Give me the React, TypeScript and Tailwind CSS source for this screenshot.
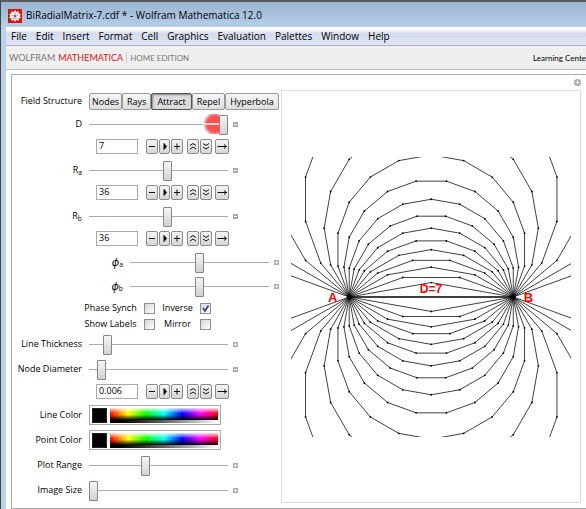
import { useState } from "react"
import type { ReactNode } from "react"

const menus = ["File", "Edit", "Insert", "Format", "Cell", "Graphics", "Evaluation", "Palettes", "Window", "Help"]
const structures = ["Nodes", "Rays", "Attract", "Repel", "Hyperbola"]

const buttonStyle =
  "flex items-center justify-center rounded-[2px] border border-[#8a8a8a] bg-linear-to-b from-[#f5f5f5] to-[#d6d6d6]"

// Poles of the field in plot coordinates
const poleA = { x: 58, y: 139.5 }
const poleB = { x: 221.5, y: 139.5 }
const step = 10

type Point = { x: number; y: number }

// Crossing of the ray at angle a from pole A with the ray at angle b from pole B
function crossing(a: number, b: number, side: number): Point {
  const ra = (a * Math.PI) / 180
  const rb = (b * Math.PI) / 180
  const r = ((poleB.x - poleA.x) * Math.sin(rb)) / Math.sin(ra + rb)
  return { x: poleA.x + r * Math.cos(ra), y: poleA.y - side * r * Math.sin(ra) }
}

function fieldLines() {
  const lines: Point[][] = []
  for (const side of [1, -1]) {
    for (let sum = 2 * step; sum < 180; sum += step) {
      const line: Point[] = []
      for (let a = sum; a >= 0; a -= step) {
        line.push(crossing(a, sum - a, side))
      }
      lines.push(line)
    }
  }
  return lines
}

function FieldPlot() {
  const lines = fieldLines()
  return (
    <svg viewBox="0 0 279 279" className="w-full overflow-hidden" role="img" aria-label="Field plot">
      {lines.map((line, i) => (
        <g key={i}>
          <polyline
            points={line.map((p) => `${p.x.toFixed(2)},${p.y.toFixed(2)}`).join(" ")}
            fill="none"
            stroke="#000"
            strokeWidth="0.75"
          />
          {line.map((p, j) => (
            <circle key={j} cx={p.x} cy={p.y} r="0.9" />
          ))}
        </g>
      ))}
      <path d={`M${poleA.x} ${poleA.y}H${poleB.x}`} stroke="#000" strokeWidth="1.6" />
      <circle cx={poleA.x} cy={poleA.y} r="2.5" />
      <circle cx={poleB.x} cy={poleB.y} r="2.5" />
      <g fill="#f00" fontFamily="Liberation Sans, Arial, sans-serif" fontWeight="bold" fontSize="13" textAnchor="middle">
        <text x="41.5" y="144">A</text>
        <text x="139.5" y="136" fontSize="12">D=7</text>
        <text x="236.5" y="144">B</text>
      </g>
    </svg>
  )
}

function Row({ label, htmlFor, children }: { label: ReactNode; htmlFor?: string; children: ReactNode }) {
  return (
    <div className="flex h-6 items-center">
      <label htmlFor={htmlFor} className="w-[70px] shrink-0 text-right whitespace-nowrap">
        {label}
      </label>
      <div className="ml-[7px] flex items-center">{children}</div>
    </div>
  )
}

function Slider({ id, start, open, glow }: { id: string; start: number; open?: boolean; glow?: boolean }) {
  const [value, setValue] = useState(start)
  return (
    <>
      <span className="relative flex">
        <input
          id={id}
          type="range"
          min={0}
          max={130}
          value={value}
          onChange={(e) => setValue(Number(e.target.value))}
          className="h-5 w-[139px] appearance-none bg-transparent [&::-webkit-slider-runnable-track]:h-px [&::-webkit-slider-runnable-track]:bg-[#aaa] [&::-webkit-slider-thumb]:-mt-[9px] [&::-webkit-slider-thumb]:h-5 [&::-webkit-slider-thumb]:w-[9px] [&::-webkit-slider-thumb]:appearance-none [&::-webkit-slider-thumb]:rounded-[1px] [&::-webkit-slider-thumb]:border [&::-webkit-slider-thumb]:border-[#858585] [&::-webkit-slider-thumb]:bg-linear-to-b [&::-webkit-slider-thumb]:from-[#f6f6f6] [&::-webkit-slider-thumb]:to-[#d2d2d2]"
        />
        {glow && (
          <span className="pointer-events-none absolute top-0 right-[9px] h-5 w-[16px] bg-[linear-gradient(transparent_9px,#ffd0d0_9px,#ffd0d0_11px,transparent_11px),radial-gradient(circle_at_12px_10px,#ff5050_7px,#ff6a6a_9px,transparent_12px)]" />
        )}
      </span>
      <button
        type="button"
        aria-label={open ? "Show controls" : "Hide controls"}
        className="ml-[5px] flex size-[5px] items-center justify-center bg-[#aaa]"
      >
        <svg viewBox="0 0 5 5" className="size-[5px]" stroke="#fff">
          <path d={open ? "M1 2.5H4M2.5 1V4" : "M1 2.5H4"} />
        </svg>
      </button>
    </>
  )
}

function Glyph({ d, solid }: { d: string; solid?: boolean }) {
  return (
    <svg viewBox="0 0 10 12" className="h-3 w-2.5 shrink-0" fill={solid ? "#000" : "none"} stroke="#111" strokeWidth="1">
      <path d={d} />
    </svg>
  )
}

function Animator({ name, start }: { name: string; start: string }) {
  const [value, setValue] = useState(start)
  return (
    <div className="ml-[84px] flex h-5 items-center">
      <input
        type="text"
        aria-label={name}
        value={value}
        onChange={(e) => setValue(e.target.value)}
        className="h-[15px] w-[42px] border border-[#aaa] bg-white px-[2px] text-[9px]"
      />
      <div className="ml-2 flex gap-px">
        <button type="button" aria-label="Step back" className={`${buttonStyle} h-[15px] w-3`}>
          <Glyph d="M2 6.5H8" />
        </button>
        <button type="button" aria-label="Play" className={`${buttonStyle} h-[15px] w-[11px]`}>
          <Glyph d="M4 3.5L6.5 6.5L4 9.5Z" solid />
        </button>
        <button type="button" aria-label="Step forward" className={`${buttonStyle} h-[15px] w-3`}>
          <Glyph d="M2 6.5H8M5 3.5V9.5" />
        </button>
      </div>
      <div className="ml-1 flex gap-px">
        <button type="button" aria-label="Faster" className={`${buttonStyle} h-[15px] w-3`}>
          <Glyph d="M2 5.5L5 3.5L8 5.5M2 9L5 7L8 9" />
        </button>
        <button type="button" aria-label="Slower" className={`${buttonStyle} h-[15px] w-3`}>
          <Glyph d="M2 3.5L5 5.5L8 3.5M2 7L5 9L8 7" />
        </button>
      </div>
      <button type="button" aria-label="Direction" className={`${buttonStyle} ml-[3px] h-[15px] w-[14px]`}>
        <Glyph d="M0.5 6.5H9.5M7 4.5L9.5 6.5L7 8.5" />
      </button>
    </div>
  )
}

function CheckBox({ label, start }: { label: string; start?: boolean }) {
  const [checked, setChecked] = useState(Boolean(start))
  return (
    <label className="contents">
      <span className="text-center">{label}</span>
      <span className="relative flex size-[11px]">
        <input
          type="checkbox"
          checked={checked}
          onChange={(e) => setChecked(e.target.checked)}
          className="size-[11px] appearance-none border border-[#8e8f8f] bg-linear-to-br from-[#d5d8dc] to-white"
        />
        {checked && (
          <svg viewBox="0 0 11 11" className="pointer-events-none absolute inset-0" fill="none" stroke="#2c3f87" strokeWidth="1.7">
            <path d="M3 5L5 8L8.5 2.5" />
          </svg>
        )}
      </span>
    </label>
  )
}

function ColorSlider({ name }: { name: string }) {
  return (
    <div className="flex h-5 w-[132px] border border-[#aaa] bg-white p-[2px]">
      <button type="button" aria-label={`${name} swatch`} className="h-[15px] w-[15px] shrink-0 border border-[#222] bg-black" />
      <button type="button" aria-label={name} className="ml-[3px] flex h-[15px] flex-1 flex-col">
        <span className="h-3 w-full bg-[linear-gradient(rgba(255,255,255,0.85),transparent_45%,transparent_55%,black),linear-gradient(90deg,#f00,#ff0,#0f0,#0ff,#00f,#f0f,#f00)]" />
        <span className="h-[3px] w-full bg-linear-to-r from-black to-white" />
      </button>
    </div>
  )
}

function Controls() {
  const [structure, setStructure] = useState("Attract")
  return (
    <div className="w-[269px] shrink-0 text-[9px] leading-4">
      <div className="flex h-[22px] items-center">
        <span className="w-[70px] shrink-0 text-right whitespace-nowrap">Field Structure</span>
        <div className="ml-[7px] flex">
          {structures.map((name) => (
            <button
              key={name}
              type="button"
              aria-pressed={structure === name}
              onClick={() => setStructure(name)}
              className={
                structure === name
                  ? "h-[17px] rounded-[2px] border border-[#555] bg-[#dcdcdc] px-[5px] leading-[15px] shadow-[inset_1px_1px_2px_#888]"
                  : "h-[17px] rounded-[2px] border border-[#999] bg-linear-to-b from-[#f7f7f7] to-[#dedede] px-1 leading-[15px] first:px-[2px]"
              }
            >
              {name}
            </button>
          ))}
        </div>
      </div>
      <div className="flex flex-col gap-[2px]">
        <div>
          <Row label="D" htmlFor="d">
            <Slider id="d" start={130} glow />
          </Row>
          <Animator name="D value" start="7" />
        </div>
        <div>
          <Row label={<>R<sub>a</sub></>} htmlFor="ra">
            <Slider id="ra" start={74} />
          </Row>
          <Animator name="Ra value" start="36" />
        </div>
        <div>
          <Row label={<>R<sub>b</sub></>} htmlFor="rb">
            <Slider id="rb" start={74} />
          </Row>
          <Animator name="Rb value" start="36" />
        </div>
        <div className="pl-[41px]">
          <Row label={<><i className="text-[11px]">ϕ</i><sub>a</sub></>} htmlFor="phia">
            <Slider id="phia" start={65} open />
          </Row>
          <Row label={<><i className="text-[11px]">ϕ</i><sub>b</sub></>} htmlFor="phib">
            <Slider id="phib" start={65} open />
          </Row>
        </div>
      </div>
      <div className="mt-[2px] ml-[72px] grid grid-cols-[53px_11px_31px_11px] items-center gap-x-[7px] whitespace-nowrap">
        <CheckBox label="Phase Synch" />
        <CheckBox label="Inverse" start />
        <CheckBox label="Show Labels" />
        <CheckBox label="Mirror" />
      </div>
      <div className="flex flex-col gap-px">
        <Row label="Line Thickness" htmlFor="thickness">
          <Slider id="thickness" start={14} open />
        </Row>
        <Row label="Node Diameter" htmlFor="diameter">
          <Slider id="diameter" start={8} />
        </Row>
      </div>
      <Animator name="Node Diameter value" start="0.006" />
      <div className="mt-[2px] flex flex-col gap-px">
        <Row label="Line Color">
          <ColorSlider name="Line Color" />
        </Row>
        <Row label="Point Color">
          <ColorSlider name="Point Color" />
        </Row>
        <Row label="Plot Range" htmlFor="range">
          <Slider id="range" start={52} open />
        </Row>
        <Row label="Image Size" htmlFor="size">
          <Slider id="size" start={0} open />
        </Row>
      </div>
    </div>
  )
}

export default function App() {
  return (
    <div className="min-h-screen overflow-hidden border-t-2 border-l border-t-[#5b5b5d] border-l-[#444] bg-[#b9d1ea] pl-[5px] font-['Open_Sans','Noto_Sans',sans-serif] text-black">
      <header className="-ml-[5px] flex h-[25px] items-center gap-1 bg-linear-to-b from-[#9bb5d1] to-[#b5cfe9] pt-[2px] pl-[7px]">
        <svg viewBox="0 0 14 14" className="size-[14px]">
          <path d="M0 0H14V14H0Z" fill="#dd1100" />
          <path
            d="M7 1L8.3 3L10.5 2L10.7 4.4L13 5.1L11.7 7L13 8.9L10.7 9.6L10.5 12L8.3 11L7 13L5.7 11L3.5 12L3.3 9.6L1 8.9L2.3 7L1 5.1L3.3 4.4L3.5 2L5.7 3Z"
            fill="#fff"
          />
          <path d="M7 3.5V5.5M7 8.5V10.5M3.8 6L5.5 6.6M10.2 6L8.5 6.6M5 9.8L6 8.4M9 9.8L8 8.4" stroke="#e33" strokeWidth="0.7" />
          <circle cx="7" cy="7" r="1.2" fill="#e33" />
        </svg>
        <h1 className="text-[10px] whitespace-nowrap">BiRadialMatrix-7.cdf * - Wolfram Mathematica 12.0</h1>
      </header>
      <nav className="flex h-[19px] items-center gap-[9px] border-b border-[#b0b5c5] bg-linear-to-b from-white from-10% via-[#d5dcee] via-35% to-[#dfe5f4] pl-[5px] text-[10px]">
        {menus.map((name) => (
          <button key={name} type="button">
            {name}
          </button>
        ))}
      </nav>
      <div className="flex h-6 items-center justify-between border-b border-[#bbb] bg-[#efefef] pl-[3px] font-['Lato','Open_Sans',sans-serif] whitespace-nowrap">
        <div className="flex items-center gap-[3px] text-[9px] text-[#777]">
          <span>WOLFRAM</span>
          <span className="text-[#dd1122]">MATHEMATICA</span>
          <span className="border-l border-[#ccc] pl-[3px] text-[8px] leading-3">HOME EDITION</span>
        </div>
        <a href="#learning" className="text-[8px]">
          Learning Cente
        </a>
      </div>
      <main className="bg-white pt-1 pb-px pl-[5px]">
        <div className="flex h-[435px] border-y border-l border-[#aaa]">
          <div className="pt-[15px]">
            <Controls />
          </div>
          <section className="flex min-w-0 flex-1 flex-col pr-[5px] pb-[5px]">
            <div className="flex h-[15px] items-center justify-end">
              <button type="button" aria-label="Options">
                <svg viewBox="0 0 7 7" className="size-[7px]">
                  <circle cx="3.5" cy="3.5" r="3.5" fill="#aaa" />
                  <path d="M3.5 1.5V5.5M1.5 3.5H5.5" stroke="#fff" />
                </svg>
              </button>
            </div>
            <div className="flex flex-1 items-center border border-[#ddd] px-[9px]">
              <FieldPlot />
            </div>
          </section>
        </div>
      </main>
    </div>
  )
}
